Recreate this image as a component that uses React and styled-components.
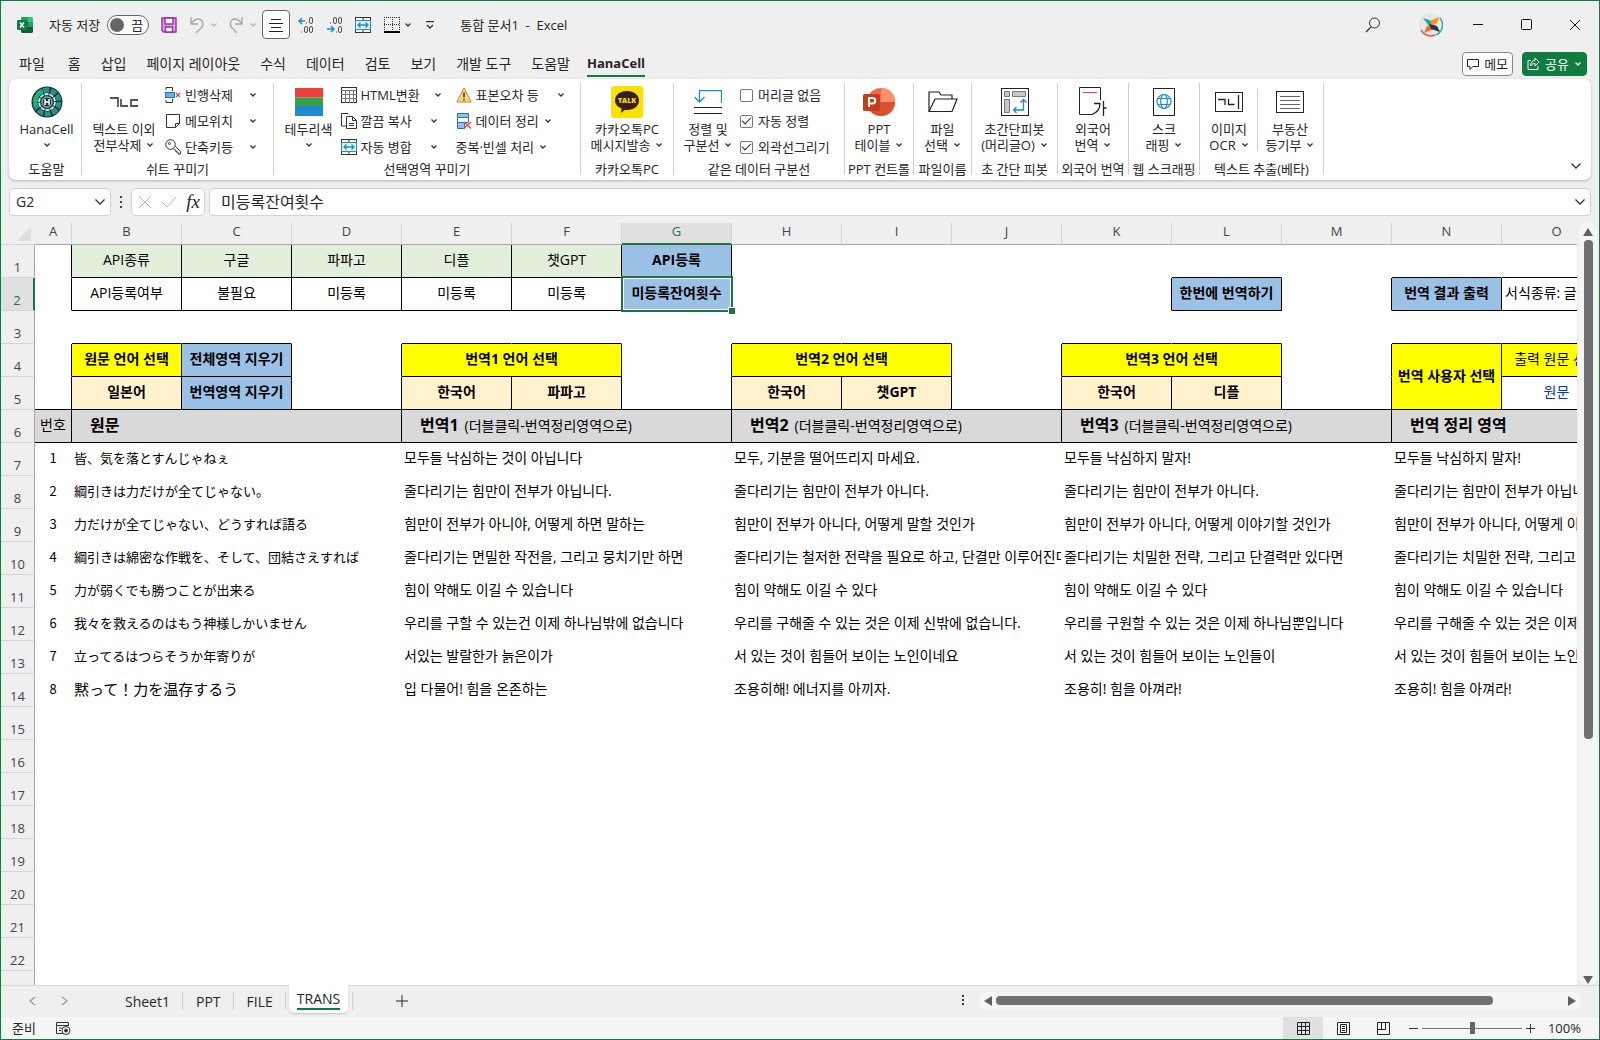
import React, { useState } from 'react';
import styled, { createGlobalStyle, css } from 'styled-components';

const GREEN = '#107c41';
const FONT = '"Open Sans", "Noto Sans CJK KR", sans-serif';

/* ---------- data ---------- */

const menuTabs = ['파일', '홈', '삽입', '페이지 레이아웃', '수식', '데이터', '검토', '보기', '개발 도구', '도움말', 'HanaCell'];
const sheetTabs = ['Sheet1', 'PPT', 'FILE', 'TRANS'];
const columns = 'ABCDEFGHIJKLMNO'.split('');

// r / b: black line on the right / bottom edge
const topRows = [
  [
    { r: 1 },
    { t: 'API종류', bg: 'mint', r: 1, b: 1 },
    { t: '구글', bg: 'mint', r: 1, b: 1 },
    { t: '파파고', bg: 'mint', r: 1, b: 1 },
    { t: '디플', bg: 'mint', r: 1, b: 1 },
    { t: '챗GPT', bg: 'mint', r: 1, b: 1 },
    { t: 'API등록', bg: 'blue', bold: 1, r: 1, b: 1 },
    {}, {}, {}, {}, { b: 1 }, {}, { b: 1 }, { b: 1 },
  ],
  [
    { r: 1 },
    { t: 'API등록여부', r: 1, b: 1 },
    { t: '불필요', r: 1, b: 1 },
    { t: '미등록', r: 1, b: 1 },
    { t: '미등록', r: 1, b: 1 },
    { t: '미등록', r: 1, b: 1 },
    { t: '미등록잔여횟수', bg: 'blue', bold: 1, r: 1, b: 1, selected: 1 },
    {}, {}, {}, { r: 1 },
    { t: '한번에 번역하기', bg: 'blue', bold: 1, r: 1, b: 1 },
    { r: 1 },
    { t: '번역 결과 출력', bg: 'blue', bold: 1, r: 1, b: 1 },
    { t: '서식종류: 글꼴', left: 1, b: 1 },
  ],
  [
    {}, { b: 1 }, { b: 1 }, {}, { b: 1 }, { b: 1 }, {}, { b: 1 }, { b: 1 }, {}, { b: 1 }, { b: 1 }, {}, { b: 1 }, { b: 1 },
  ],
  [
    { r: 1 },
    { t: '원문 언어 선택', bg: 'yellow', bold: 1, r: 1, b: 1 },
    { t: '전체영역 지우기', bg: 'blue', bold: 1, r: 1, b: 1 },
    { r: 1 },
    { t: '번역1 언어 선택', bg: 'yellow', bold: 1, span: 2, r: 1, b: 1 },
    { r: 1 },
    { t: '번역2 언어 선택', bg: 'yellow', bold: 1, span: 2, r: 1, b: 1 },
    { r: 1 },
    { t: '번역3 언어 선택', bg: 'yellow', bold: 1, span: 2, r: 1, b: 1 },
    { r: 1 },
    { t: '번역 사용자 선택', bg: 'yellow', bold: 1, rows: 2, r: 1, b: 1 },
    { t: '출력 원문 선택', bg: 'yellow', b: 1 },
  ],
  [
    { r: 1, b: 1 },
    { t: '일본어', bg: 'cream', bold: 1, r: 1, b: 1 },
    { t: '번역영역 지우기', bg: 'blue', bold: 1, r: 1, b: 1 },
    { r: 1, b: 1 },
    { t: '한국어', bg: 'cream', bold: 1, r: 1, b: 1 },
    { t: '파파고', bg: 'cream', bold: 1, r: 1, b: 1 },
    { r: 1, b: 1 },
    { t: '한국어', bg: 'cream', bold: 1, r: 1, b: 1 },
    { t: '챗GPT', bg: 'cream', bold: 1, r: 1, b: 1 },
    { r: 1, b: 1 },
    { t: '한국어', bg: 'cream', bold: 1, r: 1, b: 1 },
    { t: '디플', bg: 'cream', bold: 1, r: 1, b: 1 },
    { r: 1, b: 1 },
    { t: '원문', color: '#0033cc', b: 1 },
  ],
];

const hint = '(더블클릭-번역정리영역으로)';
const areas = [
  { t: '원문', span: 3 },
  { t: '번역1', hint, span: 3 },
  { t: '번역2', hint, span: 3 },
  { t: '번역3', hint, span: 3 },
  { t: '번역 정리 영역', span: 2 },
];

const lines = [
  ['皆、気を落とすんじゃねぇ', '모두들 낙심하는 것이 아닙니다', '모두, 기분을 떨어뜨리지 마세요.', '모두들 낙심하지 말자!', '모두들 낙심하지 말자!'],
  ['綱引きは力だけが全てじゃない。', '줄다리기는 힘만이 전부가 아닙니다.', '줄다리기는 힘만이 전부가 아니다.', '줄다리기는 힘만이 전부가 아니다.', '줄다리기는 힘만이 전부가 아닙니다.'],
  ['力だけが全てじゃない、どうすれば語る', '힘만이 전부가 아니야, 어떻게 하면 말하는', '힘만이 전부가 아니다, 어떻게 말할 것인가', '힘만이 전부가 아니다, 어떻게 이야기할 것인가', '힘만이 전부가 아니다, 어떻게 이야기할 것인가'],
  ['綱引きは綿密な作戦を、そして、団結さえすれば', '줄다리기는 면밀한 작전을, 그리고 뭉치기만 하면', '줄다리기는 철저한 전략을 필요로 하고, 단결만 이루어진다면', '줄다리기는 치밀한 전략, 그리고 단결력만 있다면', '줄다리기는 치밀한 전략, 그리고 단결력만 있다면'],
  ['力が弱くでも勝つことが出来る', '힘이 약해도 이길 수 있습니다', '힘이 약해도 이길 수 있다', '힘이 약해도 이길 수 있다', '힘이 약해도 이길 수 있습니다'],
  ['我々を救えるのはもう神様しかいません', '우리를 구할 수 있는건 이제 하나님밖에 없습니다', '우리를 구해줄 수 있는 것은 이제 신밖에 없습니다.', '우리를 구원할 수 있는 것은 이제 하나님뿐입니다', '우리를 구해줄 수 있는 것은 이제 신밖에 없습니다.'],
  ['立ってるはつらそうか年寄りが', '서있는 발랄한가 늙은이가', '서 있는 것이 힘들어 보이는 노인이네요', '서 있는 것이 힘들어 보이는 노인들이', '서 있는 것이 힘들어 보이는 노인들이'],
  ['黙って！力を温存するう', '입 다물어! 힘을 온존하는', '조용히해! 에너지를 아끼자.', '조용히! 힘을 아껴라!', '조용히! 힘을 아껴라!'],
];

const emptyRows = [15, 16, 17, 18, 19, 20, 21, 22, 23];

/* ---------- icons ---------- */

const Svg = ({ w = 16, h, box, children, ...rest }) => (
  <svg width={w} height={h || w} viewBox={box || `0 0 ${w} ${h || w}`} fill="none" stroke="#333" strokeWidth="1" aria-hidden="true" {...rest}>
    {children}
  </svg>
);

const Caret = ({ color = '#333' }) => (
  <Svg w={8} h={6} stroke={color} strokeWidth="1.3"><path d="M1.5 1.5 4 4l2.5-2.5" /></Svg>
);
const Chevron = ({ color = '#333' }) => (
  <Svg w={12} h={8} stroke={color} strokeWidth="1.3"><path d="M1.5 1.5 6 6l4.500-4.500" /></Svg>
);

const ExcelIcon = () => (
  <Svg w={18} stroke="none">
    <path d="M6 1h6v5H5V2z" fill="#21a366" /><path d="M12 1h4l1 1v4h-5z" fill="#33c481" />
    <path d="M5 6h7v5H5z" fill="#107c41" /><path d="M12 6h5v5h-5z" fill="#21a366" />
    <path d="M5 11h12v5l-1 1H6l-1-1z" fill="#185c37" />
    <rect x="1" y="4" width="10" height="10" rx="1" fill="#107c41" />
    <path d="m4 6.500 4 5M8 6.500l-4 5" stroke="#fff" strokeWidth="1.500" />
  </Svg>
);
const SaveIcon = () => (
  <Svg w={18} stroke="#9b2fa5" strokeWidth="1.400">
    <path d="M2 2h14v14H3.500L2 14.500z" fill="#d9a3e0" /><path d="M5 2h8v6H5z" fill="#fff" /><path d="M5.500 16v-5h7v5z" fill="#fff" />
  </Svg>
);
const UndoIcon = () => <Svg w={18} stroke="#a9a9a9" strokeWidth="1.400"><path d="M3 1v7h7M3 8c2-3 4-5 7-5 5 0 6 6 3 9l-5 5" /></Svg>;
const RedoIcon = () => <Svg w={18} stroke="#a9a9a9" strokeWidth="1.400"><path d="M15 1v7H8M15 8c-2-3-4-5-7-5-5 0-6 6-3 9l5 5" /></Svg>;
const AlignIcon = () => <Svg w={16} stroke="#222"><path d="M3 2.500h10M1 6.500h14M3 10.500h10M1 14.500h14" /></Svg>;
const Digit = ({ x, y }) => <rect x={x} y={y} width="3" height="6" rx="1.500" stroke="#555" />;
const DecIncIcon = () => (
  <Svg w={18}>
    <Digit x={12.5} y={1.5} /><Digit x={7.5} y={10.5} /><Digit x={12.5} y={10.5} />
    <path d="M9.500 6.500v1M4.500 15.500v1" /><path d="M8 5H2m3-3L2 5l3 3" stroke="#1e8bcd" strokeWidth="1.500" />
  </Svg>
);
const DecDecIcon = () => (
  <Svg w={18}>
    <Digit x={7.5} y={1.5} /><Digit x={12.5} y={1.5} /><Digit x={12.5} y={10.5} />
    <path d="M4.500 6.500v1M10.500 15.500v1" /><path d="M1 13h7m-3-3 3 3-3 3" stroke="#1e8bcd" strokeWidth="1.500" />
  </Svg>
);
const MergeIcon = () => (
  <Svg w={16}>
    <rect x=".5" y=".5" width="15" height="15" fill="#fff" /><path d="M8 0v4M8 12v4" />
    <rect x=".5" y="3.500" width="15" height="9" fill="#e5f2fb" stroke="#1e8bcd" />
    <path d="M3 8h10M5.500 5.500 3 8l2.500 2.500M10.500 5.500 13 8l-2.500 2.500" stroke="#1e8bcd" strokeWidth="1.300" />
  </Svg>
);
const BorderIcon = () => (
  <Svg w={16}><path d="M0 .5h16M.5 0v14M15.500 0v14M8.500 0v14M0 7.500h16" strokeDasharray="1 1" /><path d="M0 15h16" stroke="#000" strokeWidth="2" /></Svg>
);
const SearchIcon = () => <Svg w={16}><circle cx="9.500" cy="6" r="5" /><path d="m6 10-5 5" strokeWidth="1.300" /></Svg>;
const Avatar = () => (
  <Svg w={24} stroke="none">
    <circle cx="12" cy="12" r="12" fill="#e6e6e6" />
    <path d="M2 17a11 11 0 0 0 14 5" stroke="#e8505b" strokeWidth="1.500" /><path d="M21 5a11 11 0 0 1-4 17" stroke="#2bb3a3" strokeWidth="1.500" />
    <path d="m4 5 9 3 3 5-5 1z" fill="#1aa593" /><path d="M20 4l-2 6-5 3-2-5z" fill="#f6921e" />
    <path d="m5 20 3-7 6-1 1 4z" fill="#f36c35" /><path d="m10 11 8 2 3 6-9-3z" fill="#27364a" />
  </Svg>
);
const MemoBubble = () => <Svg w={12} h={12} stroke="#222"><path d="M.5 1.500h11v7H6l-3 3v-3H.5z" /></Svg>;
const ShareIcon = () => <Svg w={13} stroke="#fff"><path d="M4 3.500H1v9h10V9" /><path d="M8 1v2.500C5 3.500 3.500 6 3.500 9 5 7 6 6.500 8 6.500V9l4-4z" /></Svg>;

const HanaIcon = () => (
  <Svg w={32} stroke="none">
    <circle cx="16" cy="16" r="15.500" fill="#14323a" />
    <circle cx="16" cy="16" r="12" stroke="#2f8e86" strokeWidth="5" strokeDasharray="6 1.500" />
    <path d="M5 20A12 12 0 0 1 12 5" stroke="#1db37c" strokeWidth="4" />
    <circle cx="16" cy="16" r="8" fill="#1c4b50" stroke="#d9e8e4" strokeWidth="1.800" strokeDasharray="4 1" />
    <circle cx="16" cy="16" r="5" fill="#15343c" stroke="#bcd8d2" />
    <path d="M14 13v6M18 13v6M14 16h4" stroke="#fff" strokeWidth="1.500" />
  </Svg>
);
const JamoIcon = () => <Svg w={30} h={12} stroke="#555" strokeWidth="1.800"><path d="M1 2h8v9M12 3v7h7M29 4h-7v6h7" /></Svg>;
const RowDelIcon = () => (
  <Svg w={16}>
    <path d="M1 3V.5h6.500V4M1 13v2.500h6.500V12" /><rect x=".5" y="5.500" width="9" height="5" fill="#69afe5" stroke="#1e6fb5" />
    <path d="m11 6 4 4m0-4-4 4" stroke="#e8443a" strokeWidth="1.300" />
  </Svg>
);
const NoteIcon = () => <Svg w={16}><path d="M1.500 1.500h13v9l-4 4h-9z" /><path d="M14.500 10.500h-4v4" /></Svg>;
const KeyIcon = () => <Svg w={16}><circle cx="5.500" cy="5.500" r="4.800" /><circle cx="4.500" cy="4.500" r="1" /><path d="m8.500 9.500 1 1.500h1.500v2h2v2h2.500v-2.500l-5-5" /></Svg>;
const ColorsIcon = () => (
  <Svg w={28} stroke="none"><path d="M0 0h28v9.500H0z" fill="#f03e3e" /><path d="M0 9.500h28v8.500H0z" fill="#37a04b" /><path d="M0 18h28v10H0z" fill="#1f8bd0" /></Svg>
);
const TableIcon = () => <Svg w={16}><rect x=".5" y=".5" width="15" height="15" /><path d="M0 3.500h16M0 7.500h16M0 11.500h16M4.500 3v13M8.500 3v13M12.500 3v13" stroke="#777" /></Svg>;
const CopyIcon = () => <Svg w={16}><path d="M5 13H.5V.5H7l1 1" /><path d="M5.500 3.500h6l4 4v8h-10zM11.500 3.500v4h4M8 10.500h5M8 12.500h5" /></Svg>;
const WarnIcon = () => <Svg w={16}><path d="M8 1 15.200 15H.8z" fill="#fbd87f" stroke="#e07b1a" /><path d="M8 5.500v5M8 12v1.500" strokeWidth="1.500" /></Svg>;
const CleanIcon = () => (
  <Svg w={16} stroke="#2474bb">
    <path d="M1.500.5h11v4h-11z" fill="#8cc3ee" /><path d="M1.500 4.500h11v5h-11z" fill="#fff" /><path d="M1.500 9.500h7v6h-7z" fill="#8cc3ee" />
    <path d="m8 9 7 6.500M15 9l-7 6.500" stroke="#e8443a" strokeWidth="1.300" />
  </Svg>
);
const TalkBubble = styled.span`
  display: grid;
  place-items: center;
  width: 32px;
  height: 32px;
  border-radius: 3px;
  background: #fae100;
  svg { grid-area: 1 / 1; }
  b {
    grid-area: 1 / 1;
    padding-bottom: 2px;
    color: #fae100;
    font-size: 7px;
    line-height: 8px;
    font-weight: 800;
  }
`;
const TalkIcon = () => (
  <TalkBubble>
    <Svg w={26} h={24} stroke="none"><path d="M13 1c7 0 12 4 12 9.500S20 20 13 20c-1 0-1 0-2-.2L7 23l.5-4.500C3.500 17 1 14 1 10.500 1 5 6 1 13 1" fill="#371d1e" /></Svg>
    <b>TALK</b>
  </TalkBubble>
);
const SortLineIcon = () => <Svg w={28} h={25} stroke="#222"><path d="M27.500 13V.5h-22V11M.5 7l5 5 5-5" stroke="#1e8bcd" strokeWidth="1.300" /><path d="M0 17.500h28M0 23.500h28" /></Svg>;
const PptIcon = () => (
  <Svg w={32} h={28} stroke="none">
    <circle cx="18" cy="14" r="14" fill="#ed6c47" /><path d="M18 0a14 14 0 0 1 14 14H18z" fill="#ff8f6b" /><path d="M4 14h28a14 14 0 0 1-28 0" fill="#d35230" />
    <rect y="6" width="17" height="17" rx="1.500" fill="#c43e1c" />
    <path d="M6 19V10h3.500a2.700 2.700 0 0 1 0 5.500H6" stroke="#fff" strokeWidth="2" />
  </Svg>
);
const FolderIcon = () => <Svg w={30} h={22} stroke="#222" strokeWidth="1.200"><path d="M1 20V1h10l2 3h11v4" /><path d="M1 20.500 7 8h22l-5 12.500z" /></Svg>;
const PivotIcon = () => (
  <Svg w={28} stroke="#222">
    <rect x=".5" y=".5" width="27" height="27" /><path d="M3.500 3.500h5v5h-5zM11.500 3.500h13v5h-13zM3.500 11.500h5v13h-5z" fill="#c8c8c8" stroke="#777" />
    <path d="M22.500 12v10H13M19.500 14.500l3-3 3 3M15.500 19l-3 3 3 3" stroke="#1e8bcd" strokeWidth="1.300" />
  </Svg>
);
const LangIcon = () => (
  <Svg w={28} h={30} stroke="#222">
    <path d="M14 27.500H.5V.5h21V13" /><path d="M4 5.500h14" stroke="#e8443a" /><path d="M15 16.500h6c0 5-3 9-8 11M24.500 14v15M24.500 21h3" strokeWidth="1.300" />
  </Svg>
);
const GlobeIcon = () => (
  <Svg w={22} h={28} stroke="#222">
    <rect x=".5" y=".5" width="21" height="27" />
    <g stroke="#1e8bcd" strokeWidth="1.200"><circle cx="11" cy="13.500" r="7" /><ellipse cx="11" cy="13.500" rx="3.300" ry="7" /><path d="M5 10.500h12M5 16.500h12" /></g>
  </Svg>
);
const OcrIcon = () => <Svg w={28} h={20} stroke="#222"><rect x=".5" y=".5" width="27" height="19" /><path d="M3 7.500h7V13M13.500 7v5.500h6M23.500 3v14" strokeWidth="1.300" /></Svg>;
const DocLinesIcon = () => <Svg w={28} h={22} stroke="#222"><rect x=".5" y=".5" width="27" height="21" /><path d="M4 5.500h20M4 9.500h20M4 13.500h20M4 17.500h20" stroke="#666" /></Svg>;

/* ---------- window ---------- */

const GlobalStyle = createGlobalStyle`
  * { box-sizing: border-box; }
  body { margin: 0; background: #efefef; }
  button, input { font: inherit; color: inherit; }
  svg { flex: none; display: block; }
`;

const Window = styled.div`
  display: flex;
  flex-direction: column;
  height: 100vh;
  overflow: hidden;
  border: 1px solid ${GREEN};
  background: #efefef;
  color: #262626;
  font-family: ${FONT};
  font-size: 13px;
  line-height: 16px;
  white-space: nowrap;
`;

const PlainButton = styled.button`
  display: flex;
  align-items: center;
  justify-content: center;
  gap: ${(props) => props.$gap || 0}px;
  padding: 0;
  border: 0;
  background: none;
`;

const TitleBar = styled.header`
  display: flex;
  align-items: center;
  height: 47px;
  padding: 0 6px 0 15px;
`;

const AutoSave = styled.label`
  display: flex;
  align-items: center;
  gap: 7px;
  margin: 0 11px 0 15px;
`;

const Toggle = styled.span`
  display: flex;
  align-items: center;
  justify-content: space-between;
  width: 42px;
  height: 20px;
  padding: 0 5px 0 2px;
  border: 1px solid #666;
  border-radius: 10px;
  background: #fff;
  input {
    appearance: none;
    width: 14px;
    height: 14px;
    margin: 0;
    border-radius: 50%;
    background: #666;
  }
`;

const QuickAccess = styled.div`
  display: flex;
  align-items: center;
`;

const QuickItem = styled(PlainButton)`
  width: ${(props) => props.$w || 28}px;
  height: 29px;
  ${(props) => props.$active && css`
    margin: 0 2px 0 6px;
    border: 1px solid #666;
    border-radius: 4px;
    background: #fff;
  `}
`;

const DocTitle = styled.div`
  margin-left: 19px;
  white-space: pre;
`;

const WindowButtons = styled.div`
  display: flex;
  align-items: center;
  margin-left: auto;
`;

const WindowButton = styled(PlainButton)`
  width: ${(props) => props.$w || 48}px;
  height: 28px;
`;

const MenuRow = styled.nav`
  display: flex;
  align-items: center;
  height: 31px;
  padding: 0 12px 0 18px;
`;

const MenuTab = styled(PlainButton)`
  margin-right: 20px;
  height: 27px;
  font-size: 14px;
  &:first-child { margin-right: 23px; }
  ${(props) => props.$active && css`
    margin-left: -3px;
    padding-bottom: 1px;
    font-size: 13px;
    font-weight: 700;
    box-shadow: inset 0 -2px 0 ${GREEN};
  `}
`;

const MenuActions = styled.div`
  display: flex;
  gap: 9px;
  margin-left: auto;
`;

const ActionButton = styled(PlainButton)`
  height: 24px;
  padding: 0 4px;
  border: 1px solid ${(props) => (props.$primary ? GREEN : '#888')};
  border-radius: 4px;
  background: ${(props) => (props.$primary ? GREEN : '#fff')};
  color: ${(props) => (props.$primary ? '#fff' : '#262626')};
`;

/* ---------- ribbon ---------- */

const RibbonBox = styled.section`
  display: flex;
  height: 101px;
  margin: 0 8px;
  padding-top: 3px;
  border-radius: 7px;
  background: #fff;
  box-shadow: 0 1px 3px #00000040;
`;

const GroupBox = styled.div`
  display: flex;
  flex-direction: column;
  flex: none;
  width: ${(props) => props.$w}px;
  height: 92px;
  margin-top: 1px;
  border-right: 1px solid #d0d0d0;
`;

const GroupBody = styled.div`
  display: flex;
  flex: none;
  justify-content: center;
  height: 77px;
  padding-top: 1px;
  padding-right: ${(props) => props.$end || 0}px;
  padding-left: ${(props) => props.$start || 0}px;
`;

const GroupLabel = styled.div`
  display: flex;
  justify-content: center;
  padding-left: ${(props) => props.$start || 0}px;
  line-height: 18px;
`;

const BigBox = styled.button`
  display: flex;
  flex-direction: column;
  align-items: center;
  flex: none;
  width: ${(props) => props.$w}px;
  height: 72px;
  padding: 0;
  border: 0;
  background: none;
  text-align: center;
`;

const BigIcon = styled.span`
  display: flex;
  align-items: center;
  justify-content: center;
  height: 37px;
  padding-bottom: 1px;
`;

const BigLine = styled.span`
  display: flex;
  align-items: center;
  justify-content: center;
  gap: 5px;
  height: 16px;
`;

const Rule = styled.span`
  width: 1px;
  height: 62px;
  margin-top: 5px;
  background: #d0d0d0;
`;

const SmallColumn = styled.div`
  display: flex;
  flex-direction: column;
  flex: none;
  width: ${(props) => props.$w}px;
  margin-left: ${(props) => props.$gap || 0}px;
  margin-top: -2px;
`;

const SmallButton = styled.button`
  display: flex;
  align-items: center;
  justify-content: space-between;
  width: ${(props) => props.$w || 92}px;
  height: 26px;
  padding: 0;
  border: 0;
  background: none;
`;

const SmallText = styled.span`
  display: flex;
  align-items: center;
  gap: 4px;
`;

const CheckRow = styled.label`
  display: flex;
  align-items: center;
  gap: 5px;
  height: 26px;
`;

const CheckBox = styled.input`
  appearance: none;
  display: grid;
  place-items: center;
  width: 13px;
  height: 13px;
  margin: 0;
  border: 1px solid #777;
  border-radius: 2px;
  background: #fff;
  &:checked::before {
    content: '';
    width: 8px;
    height: 4px;
    margin-bottom: 3px;
    border-left: 1px solid #222;
    border-bottom: 1px solid #222;
    transform: rotate(-45deg);
  }
`;

const RibbonFold = styled(PlainButton)`
  align-self: flex-end;
  width: 30px;
  height: 28px;
  margin-left: auto;
`;

const Group = ({ w, start, end, label, children }) => (
  <GroupBox $w={w}>
    <GroupBody $start={start} $end={end}>{children}</GroupBody>
    <GroupLabel $start={start}>{label}</GroupLabel>
  </GroupBox>
);

const Big = ({ w, icon, top, bottom }) => (
  <BigBox $w={w}>
    <BigIcon>{icon}</BigIcon>
    <BigLine>{top}</BigLine>
    <BigLine>{bottom}<Caret /></BigLine>
  </BigBox>
);

const Small = ({ w, icon, text }) => (
  <SmallButton $w={w}>
    <SmallText>{icon}{text}</SmallText>
    <Caret />
  </SmallButton>
);

const Check = ({ text, on }) => {
  const [checked, setChecked] = useState(!!on);
  return (
    <CheckRow>
      <CheckBox type="checkbox" checked={checked} onChange={() => setChecked(!checked)} />
      {text}
    </CheckRow>
  );
};

const Ribbon = () => (
  <RibbonBox>
    <Group w={73} start={3} label="도움말">
      <Big w={68} icon={<HanaIcon />} top="HanaCell" />
    </Group>
    <Group w={192} end={11} label="쉬트 꾸미기">
      <Big w={74} icon={<JamoIcon />} top="텍스트 이외" bottom="전부삭제" />
      <SmallColumn $w={92} $gap={4}>
        <Small icon={<RowDelIcon />} text="빈행삭제" />
        <Small icon={<NoteIcon />} text="메모위치" />
        <Small icon={<KeyIcon />} text="단축키등" />
      </SmallColumn>
    </Group>
    <Group w={307} end={9} label="선택영역 꾸미기">
      <Big w={56} icon={<ColorsIcon />} top="테두리색" />
      <SmallColumn $w={101} $gap={4}>
        <Small w={101} icon={<TableIcon />} text="HTML변환" />
        <Small w={97} icon={<CopyIcon />} text="깔끔 복사" />
        <Small w={97} icon={<MergeIcon />} text="자동 병합" />
      </SmallColumn>
      <SmallColumn $w={109} $gap={14}>
        <Small w={109} icon={<WarnIcon />} text="표본오차 등" />
        <Small w={96} icon={<CleanIcon />} text="데이터 정리" />
        <Small w={91} text="중복·빈셀 처리" />
      </SmallColumn>
    </Group>
    <Group w={93} label="카카오톡PC">
      <Big w={88} icon={<TalkIcon />} top="카카오톡PC" bottom="메시지발송" />
    </Group>
    <Group w={171} end={8} label="같은 데이터 구분선">
      <Big w={60} icon={<SortLineIcon />} top="정렬 및" bottom="구분선" />
      <SmallColumn $w={92} $gap={2}>
        <Check text="머리글 없음" />
        <Check text="자동 정렬" on />
        <Check text="외곽선그리기" on />
      </SmallColumn>
    </Group>
    <Group w={69} label="PPT 컨트롤"><Big w={64} icon={<PptIcon />} top="PPT" bottom="테이블" /></Group>
    <Group w={58} label="파일이름"><Big w={56} icon={<FolderIcon />} top="파일" bottom="선택" /></Group>
    <Group w={86} label="초 간단 피봇"><Big w={84} icon={<PivotIcon />} top="초간단피봇" bottom="(머리글O)" /></Group>
    <Group w={71} label="외국어 번역"><Big w={68} icon={<LangIcon />} top="외국어" bottom="번역" /></Group>
    <Group w={71} label="웹 스크래핑"><Big w={68} icon={<GlobeIcon />} top="스크" bottom="래핑" /></Group>
    <Group w={124} label="텍스트 추출(베타)">
      <Big w={56} icon={<OcrIcon />} top="이미지" bottom="OCR" />
      <Rule />
      <Big w={64} icon={<DocLinesIcon />} top="부동산" bottom="등기부" />
    </Group>
    <RibbonFold aria-label="리본 접기"><Chevron /></RibbonFold>
  </RibbonBox>
);

/* ---------- formula bar ---------- */

const FormulaRow = styled.div`
  display: flex;
  align-items: center;
  height: 28px;
  margin: 8px 8px 7px;
`;

const FieldBox = styled.div`
  display: flex;
  align-items: center;
  justify-content: space-between;
  width: ${(props) => props.$w};
  flex: ${(props) => props.$flex || 'none'};
  height: 28px;
  margin-right: ${(props) => props.$gap || 0}px;
  padding: 0 4px 0 ${(props) => props.$left || 6}px;
  border: 1px solid #d2d2d2;
  border-radius: 4px;
  background: #fff;
`;

const FieldInput = styled.input`
  flex: 1;
  min-width: 0;
  padding: 0;
  border: 0;
  outline: 0;
  background: none;
  font-size: ${(props) => props.$size}px;
  line-height: 22px;
`;

const DotsBox = styled.span`
  display: flex;
  justify-content: center;
  width: 20px;
`;

const FxMark = styled.i`
  font-family: "Liberation Serif", serif;
  font-size: 19px;
`;

const Dots = () => (
  <Svg w={3} h={13} stroke="none" fill="#444"><path d="M0 0h2v2H0zM0 5h2v2H0zM0 10h2v2H0z" /></Svg>
);

/* ---------- sheet ---------- */

const fills = { mint: '#e2efda', blue: '#9bc2e6', yellow: '#ffff00', cream: '#fff2cc', gray: '#d9d9d9' };

const SheetArea = styled.main`
  display: flex;
  flex: 1;
  min-height: 0;
  border-bottom: 1px solid #d8d8d8;
`;

const GridView = styled.div`
  flex: 1;
  min-width: 0;
  overflow: hidden;
  background: #fff;
`;

const Grid = styled.table`
  table-layout: fixed;
  width: 1611px;
  border-collapse: separate;
  border-spacing: 0;
  color: #000;
  font-size: 14px;
`;

const ColHead = styled.th`
  height: 22px;
  padding: 0 0 5px;
  border-right: 1px solid #d4d4d4;
  border-bottom: 1px solid #a6a6a6;
  background: #efefef;
  color: #444;
  font-size: 13px;
  line-height: 16px;
  font-weight: 400;
  ${(props) => props.$active && css`
    padding-bottom: 4px;
    border-bottom: 2px solid #217346;
    background: #e0e0e0;
    color: #217346;
  `}
`;

const Corner = styled.td`
  padding: 0 3px 3px 0;
  border-bottom: 1px solid #d4d4d4;
  border-right: 1px solid #efefef;
  background: #efefef;
  vertical-align: bottom;
  svg { margin-left: auto; }
`;

const RowHead = styled.th`
  height: 33px;
  padding: 0 0 1px;
  border-right: 1px solid #a6a6a6;
  border-bottom: 1px solid #d4d4d4;
  background: #efefef;
  color: #444;
  font-size: 13px;
  line-height: 18px;
  font-weight: 400;
  vertical-align: bottom;
  ${(props) => props.$active && css`
    border-right: 2px solid #217346;
    background: #e0e0e0;
    color: #217346;
  `}
`;

const Cell = styled.td`
  height: 33px;
  padding: 0 0 2px ${(props) => props.$pad || 0}px;
  border-right: 1px solid ${(props) => (props.$r ? '#000' : 'transparent')};
  border-bottom: 1px solid ${(props) => (props.$b ? '#000' : 'transparent')};
  background: ${(props) => fills[props.$bg] || '#fff'};
  color: ${(props) => props.$color || '#000'};
  font-weight: ${(props) => (props.$bold ? 700 : 400)};
  text-align: ${(props) => (props.$left ? 'left' : 'center')};
  ${(props) => props.$selected && css`
    position: relative;
    z-index: 1;
  `}
`;

const Clip = styled.div`
  overflow: hidden;
  line-height: 22px;
`;

const Japanese = styled(Clip)`
  font-family: "Noto Sans CJK JP", sans-serif;
  font-size: ${(props) => (props.$large ? 15 : 13)}px;
`;

const AreaTitle = styled.b`
  margin-right: 6px;
  font-size: 16px;
`;

const Selection = styled.span`
  position: absolute;
  inset: -2px -2px -2px -1px;
  border: 2px solid #217346;
  box-shadow: inset 0 0 0 1px #fff;
  &::after {
    content: '';
    position: absolute;
    right: -4px;
    bottom: -4px;
    width: 6px;
    height: 6px;
    border-top: 1px solid #fff;
    border-left: 1px solid #fff;
    background: #217346;
  }
`;

const VScroll = styled.div`
  display: flex;
  flex-direction: column;
  align-items: center;
  gap: 4px;
  width: 18px;
  margin: 0 2px 0 2px;
  padding: 5px 0 1px;
  border-radius: 8px;
  background: #f5f5f5;
`;

const VThumb = styled.div`
  width: 9px;
  height: 66%;
  margin-bottom: auto;
  border-radius: 4px;
  background: #707070;
`;

const Sheet = () => (
  <SheetArea>
    <GridView>
      <Grid>
        <colgroup>
          <col style={{ width: 34 }} />
          {columns.map((name) => <col key={name} style={{ width: name === 'A' ? 37 : 110 }} />)}
        </colgroup>
        <thead>
          <tr>
            <Corner><Svg w={14} stroke="none"><path d="M14 0v14H0z" fill="#dcdcdc" /></Svg></Corner>
            {columns.map((name) => <ColHead key={name} $active={name === 'G'}>{name}</ColHead>)}
          </tr>
        </thead>
        <tbody>
          {topRows.map((row, i) => (
            <tr key={i}>
              <RowHead $active={i === 1}>{i + 1}</RowHead>
              {row.map((cell, j) => (
                <Cell key={j} colSpan={cell.span} rowSpan={cell.rows} $bg={cell.bg} $r={cell.r} $b={cell.b} $bold={cell.bold} $left={cell.left} $pad={cell.left ? 3 : 0} $color={cell.color} $selected={cell.selected}>
                  <Clip>{cell.t}</Clip>
                  {cell.selected && <Selection />}
                </Cell>
              ))}
            </tr>
          ))}
          <tr>
            <RowHead>6</RowHead>
            <Cell $bg="gray" $r $b>번호</Cell>
            {areas.map((area) => (
              <Cell key={area.t} colSpan={area.span} $bg="gray" $r $b $left $pad={18}>
                <Clip><AreaTitle>{area.t}</AreaTitle>{area.hint}</Clip>
              </Cell>
            ))}
          </tr>
          {lines.map(([source, ...targets], i) => (
            <tr key={i}>
              <RowHead>{i + 7}</RowHead>
              <Cell><Japanese>{i + 1}</Japanese></Cell>
              <Cell colSpan={3} $left $pad={2}><Japanese lang="ja" $large={i === 7}>{source}</Japanese></Cell>
              {targets.map((text, j) => (
                <Cell key={j} colSpan={j === 3 ? 2 : 3} $left $pad={2}><Clip>{text}</Clip></Cell>
              ))}
            </tr>
          ))}
          {emptyRows.map((n) => (
            <tr key={n}>
              <RowHead>{n}</RowHead>
              <Cell colSpan={15} />
            </tr>
          ))}
        </tbody>
      </Grid>
    </GridView>
    <VScroll>
      <Svg w={10} h={8} stroke="none"><path d="m5 0 5 8H0z" fill="#606060" /></Svg>
      <VThumb />
      <Svg w={10} h={8} stroke="none"><path d="M0 0h10L5 8z" fill="#606060" /></Svg>
    </VScroll>
  </SheetArea>
);

/* ---------- bottom ---------- */

const TabBar = styled.div`
  display: flex;
  align-items: center;
  height: 31px;
  padding: 0 18px 2px 0;
`;

const SheetNav = styled.div`
  display: flex;
  width: 111px;
  padding-left: 14px;
`;

const SheetTab = styled(PlainButton)`
  height: 18px;
  padding: 2px 12px 0 13px;
  border-right: 1px solid #ccc;
  font-size: 14px;
  ${(props) => props.$active && css`
    align-self: flex-start;
    height: 28px;
    margin: -1px 4px 0 3px;
    padding: 2px 8px 0;
    border-right: 0;
    border-radius: 0 0 5px 5px;
    background: #fff;
    box-shadow: 0 1px 2px #00000030;
    span {
      padding-bottom: 1px;
      border-bottom: 2px solid ${GREEN};
    }
  `}
`;

const AddSheet = styled(PlainButton)`
  width: 98px;
  height: 18px;
  border-left: 1px solid #ccc;
`;

const HScroll = styled.div`
  display: flex;
  align-items: center;
  gap: 4px;
  width: 602px;
  height: 18px;
  padding: 0 5px;
  border-radius: 8px;
  background: #f5f5f5;
`;

const HThumb = styled.div`
  width: 84%;
  height: 9px;
  margin-right: auto;
  border-radius: 4px;
  background: #707070;
`;

const DotsGap = styled.span`
  margin: 0 14px 0 auto;
`;

const StatusBar = styled.footer`
  display: flex;
  align-items: center;
  height: 22px;
  padding: 0 18px 0 11px;
  background: #f5f5f5;
`;

const StatusText = styled.span`
  margin-right: 20px;
`;

const ViewButton = styled(PlainButton)`
  width: 40px;
  height: 22px;
  background: ${(props) => (props.$active ? '#e0e0e0' : 'none')};
`;

const ViewGroup = styled.div`
  display: flex;
  margin-left: auto;
`;

const ZoomGroup = styled.div`
  display: flex;
  align-items: center;
  gap: 4px;
  margin-left: 6px;
`;

const ZoomSlider = styled.input`
  appearance: none;
  width: 100px;
  height: 16px;
  margin: 0;
  background: linear-gradient(#777, #777) center / 100% 1px no-repeat;
  &::-webkit-slider-thumb {
    appearance: none;
    width: 5px;
    height: 12px;
    background: #666;
  }
`;

const ZoomValue = styled.span`
  width: 42px;
  text-align: right;
`;

export default function App() {
  const [tab, setTab] = useState('HanaCell');
  const [sheet, setSheet] = useState('TRANS');
  const [formula, setFormula] = useState('미등록잔여횟수');
  const [zoom, setZoom] = useState(100);

  return (
    <Window>
      <GlobalStyle />
      <TitleBar>
        <ExcelIcon />
        <AutoSave>
          자동 저장
          <Toggle><input type="checkbox" role="switch" />끔</Toggle>
        </AutoSave>
        <QuickAccess>
          <QuickItem $w={18} aria-label="저장"><SaveIcon /></QuickItem>
          <QuickItem $w={50} $gap={4} aria-label="실행 취소"><UndoIcon /><Caret color="#b5b5b5" /></QuickItem>
          <QuickItem $w={28} $gap={4} aria-label="다시 실행"><RedoIcon /><Caret color="#b5b5b5" /></QuickItem>
          <QuickItem $active aria-label="가운데 맞춤"><AlignIcon /></QuickItem>
          <QuickItem aria-label="자릿수 늘림"><DecIncIcon /></QuickItem>
          <QuickItem $w={29} aria-label="자릿수 줄임"><DecDecIcon /></QuickItem>
          <QuickItem aria-label="병합"><MergeIcon /></QuickItem>
          <QuickItem $w={42} $gap={4} aria-label="테두리"><BorderIcon /><Caret /></QuickItem>
          <QuickItem $w={22} aria-label="사용자 지정"><Svg w={8} h={8}><path d="M0 .5h8M1 4l3 3 3-3" strokeWidth="1.300" /></Svg></QuickItem>
        </QuickAccess>
        <DocTitle>통합 문서1  -  Excel</DocTitle>
        <WindowButtons>
          <WindowButton $w={56} aria-label="검색"><SearchIcon /></WindowButton>
          <WindowButton $w={60} aria-label="계정"><Avatar /></WindowButton>
          <WindowButton $w={34} aria-label="최소화"><Svg w={10}><path d="M0 4.500h10" stroke="#111" /></Svg></WindowButton>
          <WindowButton $w={62} aria-label="최대화"><Svg w={11}><rect x=".5" y=".5" width="10" height="10" rx="1" stroke="#111" /></Svg></WindowButton>
          <WindowButton $w={36} aria-label="닫기"><Svg w={12}><path d="m1 1 10 10M11 1 1 11" stroke="#111" /></Svg></WindowButton>
        </WindowButtons>
      </TitleBar>
      <MenuRow>
        {menuTabs.map((name) => (
          <MenuTab key={name} $active={name === tab} onClick={() => setTab(name)}>{name}</MenuTab>
        ))}
        <MenuActions>
          <ActionButton $gap={5}><MemoBubble />메모</ActionButton>
          <ActionButton $gap={5} $primary><ShareIcon />공유<Caret color="#fff" /></ActionButton>
        </MenuActions>
      </MenuRow>
      <Ribbon />
      <FormulaRow>
        <FieldBox $w="102px">
          <FieldInput $size={14} aria-label="이름 상자" defaultValue="G2" />
          <Chevron />
        </FieldBox>
        <DotsBox><Dots /></DotsBox>
        <FieldBox $w="74px" $gap={4}>
          <PlainButton aria-label="취소"><Svg w={14}><path d="m1 1 12 12M13 1 1 13" stroke="#b5b5b5" /></Svg></PlainButton>
          <PlainButton aria-label="입력"><Svg w={16} h={12}><path d="m1 6 5 5L15 1" stroke="#b5b5b5" /></Svg></PlainButton>
          <PlainButton aria-label="함수 삽입"><FxMark>fx</FxMark></PlainButton>
        </FieldBox>
        <FieldBox $flex="1" $left={11}>
          <FieldInput $size={16} aria-label="수식" value={formula} onChange={(e) => setFormula(e.target.value)} />
          <Chevron />
        </FieldBox>
      </FormulaRow>
      <Sheet />
      <TabBar>
        <SheetNav>
          <WindowButton $w={34} aria-label="이전 시트"><Svg w={8} h={10} stroke="#999" strokeWidth="1.300"><path d="M7 1 2 5l5 4" /></Svg></WindowButton>
          <WindowButton $w={32} aria-label="다음 시트"><Svg w={8} h={10} stroke="#999" strokeWidth="1.300"><path d="m1 1 5 4-5 4" /></Svg></WindowButton>
        </SheetNav>
        {sheetTabs.map((name) => (
          <SheetTab key={name} $active={name === sheet} onClick={() => setSheet(name)}><span>{name}</span></SheetTab>
        ))}
        <AddSheet aria-label="새 시트"><Svg w={12}><path d="M6 0v12M0 6h12" stroke="#222" /></Svg></AddSheet>
        <DotsGap><Svg w={3} h={11} stroke="none"><path d="M0 0h2v2H0zM0 4h2v2H0zM0 8h2v2H0z" fill="#333" /></Svg></DotsGap>
        <HScroll>
          <Svg w={8} h={10} stroke="none"><path d="M8 0v10L0 5z" fill="#606060" /></Svg>
          <HThumb />
          <Svg w={8} h={10} stroke="none"><path d="m0 0 8 5-8 5z" fill="#606060" /></Svg>
        </HScroll>
      </TabBar>
      <StatusBar>
        <StatusText>준비</StatusText>
        <Svg w={15} h={13}><path d="M7 11.500H.5V.5h12V4M.5 3.500h12M3 6h3M3 8.500h2" /><circle cx="10" cy="8.500" r="4" /><circle cx="10" cy="8.500" r="1.500" fill="#333" /></Svg>
        <ViewGroup>
          <ViewButton $active aria-label="기본"><Svg w={13} stroke="#222"><path d="M.5.5h12v12H.5zM.5 4.500h12M.5 8.500h12M4.500.5v12M8.500.5v12" /></Svg></ViewButton>
          <ViewButton aria-label="페이지 레이아웃"><Svg w={13} stroke="#222"><path d="M.5.5h12v12H.5zM3.500 2.500h6v8h-6zM5 4.500h3M5 6.500h3M5 8.500h3" /></Svg></ViewButton>
          <ViewButton aria-label="페이지 나누기"><Svg w={13} stroke="#222"><path d="M.5.5h12v12H.5zM.5 7.500h8v-7M4.500.5v7" /></Svg></ViewButton>
        </ViewGroup>
        <ZoomGroup>
          <PlainButton aria-label="축소"><Svg w={9}><path d="M0 4.500h9" /></Svg></PlainButton>
          <ZoomSlider type="range" min="0" max="200" value={zoom} onChange={(e) => setZoom(Number(e.target.value))} aria-label="확대/축소" />
          <PlainButton aria-label="확대"><Svg w={9}><path d="M0 4.500h9M4.500 0v9" /></Svg></PlainButton>
          <ZoomValue>{zoom}%</ZoomValue>
        </ZoomGroup>
      </StatusBar>
    </Window>
  );
}
